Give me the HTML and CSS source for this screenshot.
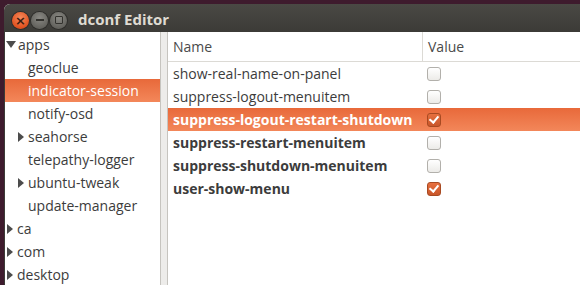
FILE: index.html
```html
<!DOCTYPE html>
<html lang="en">
<head>
    <meta charset="UTF-8">
    <title>dconf Editor</title>
    <link rel="stylesheet" href="styles.css">
</head>
<body>
    <div class="window">
        <!-- Title bar -->
        <div class="titlebar">
            <div class="wm-buttons">
                <span class="wm-btn close">&#215;</span>
                <span class="wm-btn minimize"><span class="dash"></span></span>
                <span class="wm-btn maximize"><span class="square"></span></span>
            </div>
            <div class="title">dconf Editor</div>
        </div>

        <div class="content">
            <!-- Schema tree -->
            <div class="tree">
                <div class="tree-row"><span class="exp open"></span>apps</div>
                <div class="tree-row child"><span class="exp none"></span>geoclue</div>
                <div class="tree-row child selected"><span class="exp none"></span>indicator-session</div>
                <div class="tree-row child"><span class="exp none"></span>notify-osd</div>
                <div class="tree-row child"><span class="exp"></span>seahorse</div>
                <div class="tree-row child"><span class="exp none"></span>telepathy-logger</div>
                <div class="tree-row child"><span class="exp"></span>ubuntu-tweak</div>
                <div class="tree-row child"><span class="exp none"></span>update-manager</div>
                <div class="tree-row"><span class="exp"></span>ca</div>
                <div class="tree-row"><span class="exp"></span>com</div>
                <div class="tree-row"><span class="exp"></span>desktop</div>
            </div>

            <div class="pane-handle"></div>

            <!-- Keys list -->
            <div class="keys">
                <div class="keys-header">
                    <div class="col-name">Name</div>
                    <div class="col-value">Value</div>
                </div>
                <div class="key-row">
                    <div class="col-name">show-real-name-on-panel</div>
                    <div class="col-value"><span class="check"></span></div>
                </div>
                <div class="key-row">
                    <div class="col-name">suppress-logout-menuitem</div>
                    <div class="col-value"><span class="check"></span></div>
                </div>
                <div class="key-row selected changed">
                    <div class="col-name">suppress-logout-restart-shutdown</div>
                    <div class="col-value"><span class="check on"></span></div>
                </div>
                <div class="key-row changed">
                    <div class="col-name">suppress-restart-menuitem</div>
                    <div class="col-value"><span class="check"></span></div>
                </div>
                <div class="key-row changed">
                    <div class="col-name">suppress-shutdown-menuitem</div>
                    <div class="col-value"><span class="check"></span></div>
                </div>
                <div class="key-row changed">
                    <div class="col-name">user-show-menu</div>
                    <div class="col-value"><span class="check on"></span></div>
                </div>
            </div>
        </div>
    </div>
</body>
</html>
```

FILE: styles.css
```css
body {
    margin: 0;
    background-color: #3e1b2d;
    font-family: "Open Sans", "Noto Sans", sans-serif;
    font-size: 14px;
    color: #3c3c3c;
    overflow: hidden;
}

.window {
    margin: 4px 0 0 4px;
    background-color: #fff;
    border-radius: 6px 0 0 0;
    overflow: hidden;
}

/* Title bar */
.titlebar {
    height: 28px;
    display: flex;
    align-items: center;
    background: linear-gradient(#4a4944, #3c3b37);
}

.wm-buttons {
    display: flex;
    gap: 2px;
    margin-left: 8px;
    margin-top: 4px;
}

.wm-btn {
    width: 17px;
    height: 17px;
    border-radius: 50%;
    display: flex;
    align-items: center;
    justify-content: center;
    box-shadow: 0 0 0 1px #2e2d2a;
}

.close {
    background: radial-gradient(circle at 50% 35%, #f58a5c, #e0511f 70%, #c5461a);
    color: #3a1d10;
    font-family: "DejaVu Sans", sans-serif;
    font-size: 13px;
    font-weight: bold;
    line-height: 17px;
}

.minimize,
.maximize {
    background: radial-gradient(circle at 50% 35%, #8a8984, #64635e 70%, #55544f);
}

.dash {
    width: 8px;
    height: 2px;
    background-color: #33322e;
}

.square {
    width: 6px;
    height: 6px;
    border: 1.5px solid #33322e;
    border-radius: 1px;
}

.title {
    margin-left: 11px;
    margin-top: 2px;
    font-weight: bold;
    font-size: 15px;
    color: #dfdbd2;
}

/* Content */
.content {
    display: flex;
    height: 260px;
    border-left: 1px solid #3c3b37;
}

.tree {
    width: 155px;
    padding-top: 1px;
    background-color: #fff;
}

.tree-row {
    height: 23px;
    display: flex;
    align-items: center;
    padding-left: 1px;
    white-space: nowrap;
}

.tree-row.child {
    padding-left: 12px;
}

.tree-row.selected {
    background: linear-gradient(#e8693a, #f3875a);
    color: #fff;
}

.exp {
    width: 0;
    height: 0;
    margin-right: 4px;
    border-top: 5px solid transparent;
    border-bottom: 5px solid transparent;
    border-left: 6px solid #4c4c4c;
    margin-left: 1px;
}

.exp.open {
    border-left: 5px solid transparent;
    border-right: 5px solid transparent;
    border-top: 7px solid #4c4c4c;
    border-bottom: 0;
    margin-left: 0;
    margin-right: 2px;
}

.exp.none {
    border-color: transparent;
}

.pane-handle {
    width: 6px;
    background-color: #edecea;
    border-left: 1px solid #c6c4bf;
    border-right: 1px solid #c6c4bf;
}

/* Keys list */
.keys {
    flex: 1;
    background-color: #fff;
}

.keys-header {
    height: 29px;
    display: flex;
    border-bottom: 1px solid #dcdad5;
    color: #4a4a4a;
}

.keys-header .col-name {
    border-right: 1px solid #dcdad5;
}

.key-row {
    height: 23px;
    display: flex;
    align-items: center;
    white-space: nowrap;
}

.col-name {
    width: 249px;
    padding-left: 5px;
    height: 100%;
    display: flex;
    align-items: center;
}

.col-value {
    padding-left: 5px;
    height: 100%;
    display: flex;
    align-items: center;
}

.key-row.changed {
    font-weight: bold;
}

.key-row.selected {
    background: linear-gradient(#e8693a, #f3875a);
    color: #fff;
}

.check {
    width: 12px;
    height: 12px;
    border: 1px solid #b2b0ab;
    border-radius: 3px;
    background: linear-gradient(#ffffff, #ecebe8);
    position: relative;
}

.check.on {
    border-color: #a84a22;
    background: linear-gradient(#e7703f, #c8562a);
}

.check.on::after {
    content: "";
    position: absolute;
    left: 3px;
    top: 0px;
    width: 4px;
    height: 7px;
    border-right: 2px solid #fff;
    border-bottom: 2px solid #fff;
    transform: rotate(40deg);
}
```
